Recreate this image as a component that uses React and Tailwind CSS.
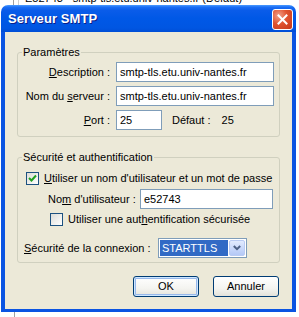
import React, { useState } from 'react';

const font = "font-['Liberation_Sans',Arial,sans-serif]";

// Checkbox in the XP Luna style
const XpCheck = ({ checked, onChange }) => (
    <button
        type="button"
        onClick={onChange}
        className="w-[13px] h-[13px] shrink-0 border border-[#1c5180] bg-[linear-gradient(135deg,#dcdcd7_0%,#ffffff_100%)] flex items-center justify-center p-0"
    >
        {checked && (
            <svg width="9" height="9" viewBox="0 0 9 9">
                <path d="M1 4 L3.5 6.5 L8 1.5" fill="none" stroke="#21a121" strokeWidth="2" />
            </svg>
        )}
    </button>
);

const XpInput = ({ value, className = '' }) => (
    <div className={`h-[20px] border border-[#7f9db9] bg-white flex items-center pl-[3px] text-[11px] text-black ${className}`}>
        {value}
    </div>
);

const XpButton = ({ children, focused }) => (
    <button
        type="button"
        className={`w-[66px] h-[21px] rounded-[3px] border border-[#003c74] bg-[linear-gradient(to_bottom,#ffffff_0%,#f4f4f0_60%,#e3e2da_100%)] text-[11px] text-black flex items-center justify-center ${focused ? 'shadow-[inset_0_0_0_1px_#cee7ff,inset_0_0_0_2px_#98b8ea]' : ''}`}
    >
        {children}
    </button>
);

const GroupBox = ({ title, children, className = '' }) => (
    <fieldset className={`border border-[#d0d0bf] rounded-[3px] ${className}`}>
        <legend className="ml-[4px] px-[1px] text-[11px] leading-[13px] text-black">{title}</legend>
        {children}
    </fieldset>
);

export default function App() {
    const [useAuth, setUseAuth] = useState(true);
    const [secure, setSecure] = useState(false);

    return (
        <div className={`w-[299px] h-[317px] bg-white overflow-hidden ${font}`}>
            {/* parent window peeking out above the dialog */}
            <div className="h-[5px] overflow-hidden flex">
                <div className="w-[13px]" />
                <div className="w-px bg-[#a0a0a0]" />
                <div className="w-[4px]" />
                <div className="w-px bg-[#d0d0d0]" />
                <div className="-mt-[8px] ml-[6px] text-[11px] leading-[13px] text-black whitespace-nowrap">
                    E52743 - smtp-tls.etu.univ-nantes.fr (Défaut)
                </div>
            </div>

            {/* dialog */}
            <div className="ml-[1px] w-[295px]">
                <div className="h-[27px] rounded-t-[7px] bg-[linear-gradient(to_bottom,#4a9bff_0%,#1b6ef5_8%,#0a5ce9_20%,#0058e6_50%,#0056e2_85%,#004ed6_100%)] flex items-center justify-between pl-[7px] pr-[3px]">
                    <span className="text-[13px] font-bold text-white [text-shadow:1px_1px_0_#0a1e8a] tracking-[0.1px]">Serveur SMTP</span>
                    <div className="w-[21px] h-[21px] rounded-[3px] border border-white bg-[radial-gradient(circle_at_30%_30%,#f2a08a_0%,#e0522f_45%,#c4381a_100%)] flex items-center justify-center mt-[2px]">
                        <svg width="11" height="11" viewBox="0 0 11 11">
                            <path d="M1.5 1.5 L9.5 9.5 M9.5 1.5 L1.5 9.5" stroke="white" strokeWidth="2" strokeLinecap="square" />
                        </svg>
                    </div>
                </div>

                <div className="h-[280px] border-x-[4px] border-b-[3px] border-[#0a54e2] bg-[#ece9d8] pt-[14px] px-[12px]">
                    <GroupBox title="Paramètres" className="pb-[6px]">
                        <div className="pt-[3px] pr-[5px] flex flex-col gap-[4px] text-[11px] text-black">
                            <div className="flex items-center">
                                <span className="w-[95px] text-right pr-[3px]"><u>D</u>escription :</span>
                                <XpInput value="smtp-tls.etu.univ-nantes.fr" className="ml-[3px] flex-1" />
                            </div>
                            <div className="flex items-center">
                                <span className="w-[95px] text-right pr-[3px]">Nom du <u>s</u>erveur :</span>
                                <XpInput value="smtp-tls.etu.univ-nantes.fr" className="ml-[3px] flex-1" />
                            </div>
                            <div className="flex items-center">
                                <span className="w-[95px] text-right pr-[3px]"><u>P</u>ort :</span>
                                <XpInput value="25" className="ml-[3px] w-[46px]" />
                                <span className="ml-[10px]">Défaut :</span>
                                <span className="ml-[11px]">25</span>
                            </div>
                        </div>
                    </GroupBox>

                    <GroupBox title="Sécurité et authentification" className="mt-[14px] pb-[4px]">
                        <div className="pr-[6px] flex flex-col text-[11px] text-black">
                            <div className="mt-[8px] pl-[8px] flex items-center gap-[5px] leading-[13px]">
                                <XpCheck checked={useAuth} onChange={() => setUseAuth(!useAuth)} />
                                <span><u>U</u>tiliser un nom d'utilisateur et un mot de passe</span>
                            </div>
                            <div className="mt-[4px] pl-[30px] flex items-center">
                                <span className="w-[92px]">No<u>m</u> d'utilisateur :</span>
                                <XpInput value="e52743" className="flex-1" />
                            </div>
                            <div className="mt-[4px] pl-[32px] flex items-center gap-[5px] leading-[13px]">
                                <XpCheck checked={secure} onChange={() => setSecure(!secure)} />
                                <span>Utiliser une aut<u>h</u>entification sécurisée</span>
                            </div>
                            <div className="mt-[12px] pl-[6px] flex items-center">
                                <span className="w-[134px]"><u>S</u>écurité de la connexion :</span>
                                <div className="w-[89px] h-[20px] border border-[#7f9db9] bg-white flex items-stretch p-[1px]">
                                    <div className="flex-1 bg-[#316ac5] text-white flex items-center pl-[2px] mr-[1px]">STARTTLS</div>
                                    <div className="w-[16px] rounded-[2px] border border-[#b9cbf3] bg-[linear-gradient(to_bottom,#e2ebfe_0%,#c6d6fa_60%,#b4c8f6_100%)] flex items-center justify-center">
                                        <svg width="8" height="6" viewBox="0 0 8 6">
                                            <path d="M0.8 1 L4 4.2 L7.2 1" fill="none" stroke="#4d6185" strokeWidth="2" />
                                        </svg>
                                    </div>
                                </div>
                            </div>
                        </div>
                    </GroupBox>

                    <div className="mt-[13px] pr-[1px] flex justify-end gap-[14px]">
                        <XpButton focused>OK</XpButton>
                        <XpButton>Annuler</XpButton>
                    </div>
                </div>
            </div>

            {/* parent window below */}
            <div className="h-[6px] flex">
                <div className="w-[14px]" />
                <div className="w-px bg-[#a0a0a0]" />
            </div>
        </div>
    );
}
